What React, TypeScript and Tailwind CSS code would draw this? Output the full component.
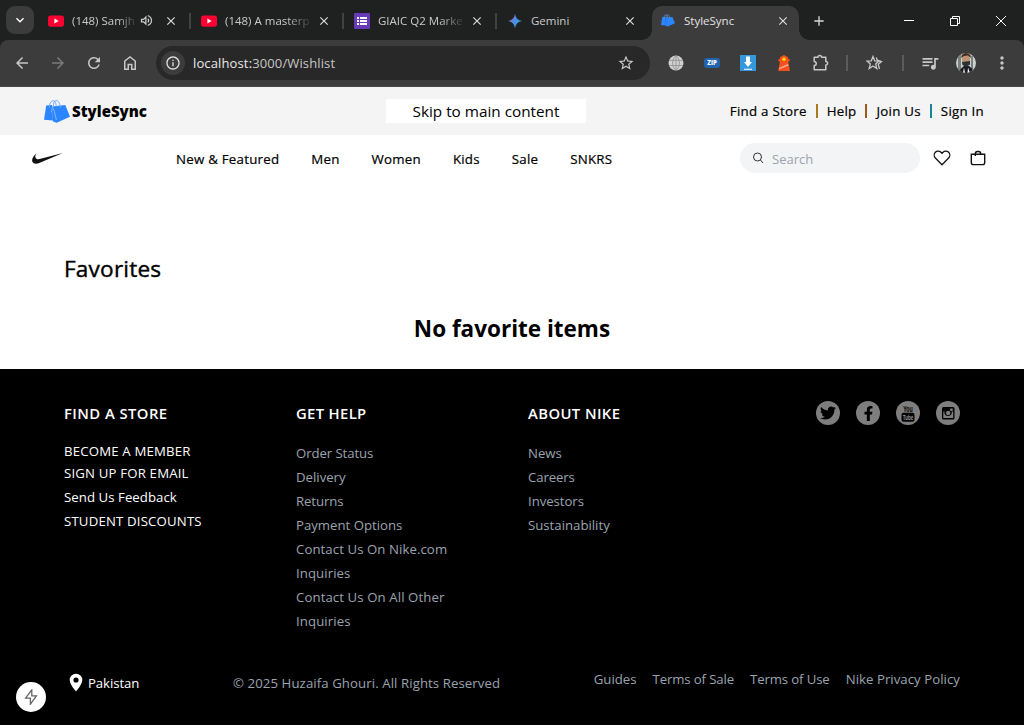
import React from "react";
import { FaFacebookF, FaTwitter } from "react-icons/fa";
import {
  MdArrowBack,
  MdArrowForward,
  MdClose,
  MdAdd,
  MdRefresh,
  MdMoreVert,
  MdStarBorder,
  MdOutlineInfo,
  MdOutlineVolumeUp,
  MdQueueMusic,
  MdKeyboardArrowDown,
} from "react-icons/md";

function YouTubeIcon() {
  return (
    <svg viewBox="0 0 16 16" className="size-4 shrink-0">
      <rect y="2.4" width="16" height="11.3" rx="2.6" fill="#ff0033" />
      <path d="M6.4 5.6v4.8L10.6 8z" fill="#fff" />
    </svg>
  );
}

function FormsIcon() {
  return (
    <svg viewBox="0 0 16 16" className="size-4 shrink-0">
      <rect width="16" height="16" rx="1" fill="#673ab7" />
      <path d="M3 4h2v2H3zM6 4h7v2H6zM3 7h2v2H3zM6 7h7v2H6zM3 10h2v2H3zM6 10h7v2H6z" fill="#fff" />
    </svg>
  );
}

function GeminiIcon() {
  return (
    <svg viewBox="0 0 16 16" className="size-4 shrink-0">
      <defs>
        <linearGradient id="gem" x1="0" y1="0.3" x2="1" y2="0.7">
          <stop offset="0" stopColor="#9b72cb" />
          <stop offset="0.5" stopColor="#4a8de0" />
          <stop offset="1" stopColor="#2ba5e0" />
        </linearGradient>
      </defs>
      <path d="M8 1Q9 7 15 8Q9 9 8 15Q7 9 1 8Q7 7 8 1z" fill="url(#gem)" />
    </svg>
  );
}

function BagsIcon({ className, gap }: { className: string; gap: string }) {
  return (
    <svg viewBox="0 0 26 23" className={className}>
      <path d="M2.2 5.6 8 5 9 20.6 0 19.8z" fill="#2a85ff" />
      <path d="M7.6 6.4 21.3 4.9 26 16.8 12.6 22.8 9 21.4z" fill="#2a85ff" />
      <path d="M8.600 6.400 7.400 12.500M9.600 8.500 12.400 20" stroke={gap} strokeWidth="0.450" fill="none" />
      <path d="M5.600 7.600C5.400 3.400 6.600 1 9 .9S12 3 12.200 6.600M9.500 7C9.200 3.500 10 .9 12.200.6S15.700 3 16.400 7.600" stroke="#6fabff" strokeWidth="1" fill="none" />
    </svg>
  );
}

type Tab = { title: string; icon: React.ReactNode; audio?: boolean; active?: boolean; fade?: boolean };

const tabs: Tab[] = [
  { title: "(148) Samjh", icon: <YouTubeIcon />, audio: true, fade: true },
  { title: "(148) A masterp", icon: <YouTubeIcon />, fade: true },
  { title: "GIAIC Q2 Marke", icon: <FormsIcon />, fade: true },
  { title: "Gemini", icon: <GeminiIcon /> },
  { title: "StyleSync", icon: <BagsIcon className="mx-px h-[13px] w-3.5 shrink-0" gap="#1668d8" />, active: true },
];

function BrowserTab({ tab, divider }: { tab: Tab; divider: boolean }) {
  return (
    <>
      <div
        className={`flex h-[34px] w-[147px] shrink-0 items-center pb-[5px] pl-2 pr-[9px] ${
          tab.active ? "relative rounded-t-[10px] bg-[#3c3c3c]" : ""
        }`}
      >
        {tab.active && (
          <>
            <span className="absolute -left-2.5 bottom-0 size-2.5 bg-[radial-gradient(circle_at_0_0,transparent_9.5px,#3c3c3c_10px)]" />
            <span className="absolute -right-2.5 bottom-0 size-2.5 bg-[radial-gradient(circle_at_100%_0,transparent_9.5px,#3c3c3c_10px)]" />
          </>
        )}
        {tab.icon}
        <span
          className={`ml-2 flex-1 overflow-hidden whitespace-nowrap text-[11.5px] leading-4 ${
            tab.active ? "text-[#e3e3e3]" : "text-[#c9cbca]"
          } ${tab.fade ? "[mask-image:linear-gradient(to_right,black_68%,transparent_98%)]" : ""}`}
        >
          {tab.title}
        </span>
        {tab.audio && <MdOutlineVolumeUp className="mr-2 size-[15px] shrink-0 text-[#c9cbca]" />}
        <MdClose className="ml-0.5 size-3.5 shrink-0 text-[#dcdcdc]" />
      </div>
      {divider && (
        <div className="flex h-[29px] w-1.5 shrink-0 items-center justify-center">
          <span className="h-4 w-0.5 bg-[#414342]" />
        </div>
      )}
      {!divider && !tab.active && <div className="w-1.5 shrink-0" />}
    </>
  );
}

function BrowserChrome() {
  return (
    <header className="h-[87px] border-b border-[#4b474b] bg-[#1f2121]">
      <div className="flex h-10 pt-1.5 pl-1.5">
        <div className="mr-1.5 flex size-7 items-center justify-center rounded-[9px] bg-[#3c3c3c] text-white">
          <MdKeyboardArrowDown className="size-4" />
        </div>
        {tabs.map((t, i) => (
          <BrowserTab key={i} tab={t} divider={i < 3} />
        ))}
        <div className="flex h-[29px] flex-1 items-center text-white">
          <MdAdd className="ml-3 size-4 text-[#d8d8d8]" />
          <span className="ml-[77px] h-px w-2.5 bg-white" />
          <svg viewBox="0 0 10 10" className="ml-9 size-2.5" fill="none" stroke="#fff">
            <path d="M.5 2.5h7v7h-7zM2.5 2.5v-2h7v7h-2" />
          </svg>
          <svg viewBox="0 0 10 10" className="ml-9 size-2.5" fill="none" stroke="#fff">
            <path d="M0 0l10 10M10 0L0 10" />
          </svg>
        </div>
      </div>
      <div className="flex h-[46px] items-center rounded-t-lg bg-[#3c3c3c] text-[#c7c7c7]">
        <MdArrowBack className="ml-[13px] size-[18px]" />
        <MdArrowForward className="ml-[18px] size-[18px] text-[#7a7a7a]" />
        <MdRefresh className="ml-[18px] size-[18px]" />
        <svg viewBox="0 0 18 18" className="ml-[18px] size-[18px]" fill="none" stroke="#c7c7c7" strokeWidth="1.500">
          <path d="M3.750 7v8.250h3.500V10.500h3.500v4.750h3.500V7L9 3z" />
        </svg>
        <div className="ml-[17px] flex h-[34px] w-[494px] items-center rounded-full bg-[#282828] pl-[5px] pr-[15px]">
          <span className="flex size-6 items-center justify-center rounded-full bg-[#3c3c3c]">
            <MdOutlineInfo className="size-4 text-[#e0e0e0]" />
          </span>
          <span className="ml-2 flex-1 text-[13px] leading-5 tracking-[0.13px] text-[#c7c7c7]">
            <span className="text-[#e8e8e8]">localhost:</span>3000/Wishlist
          </span>
          <MdStarBorder className="size-[18px]" />
        </div>
        <svg viewBox="0 0 16 16" className="ml-[18px] size-4" fill="none">
          <circle cx="8" cy="8" r="7.500" fill="#d0d0d0" />
          <path d="M1 5.300h14M1 10.500h14M8 0v16M8 .5C3.500 4 3.500 12 8 15.500M8 .5c4.500 3.500 4.500 11.500 0 15" stroke="#858585" strokeWidth=".7" />
        </svg>
        <span className="ml-5 flex h-2.5 w-4 items-center justify-center rounded-[3px] bg-[#2362ad] text-[6px] leading-none font-extrabold text-white">
          ZIP
        </span>
        <svg viewBox="0 0 16 16" className="ml-5 size-4">
          <path fill="#3498db" d="M0 0h16v16H0z" />
          <path d="M6 1.500h4V7h2L8 12 4 7h2zM4 13.800h8v1H4z" fill="#fff" />
        </svg>
        <svg viewBox="0 0 16 16" className="ml-5 size-4">
          <path d="M4 2.200 8 0l4 2.200V4h1.500v2.500H12.200L14 16H2.200L4 6.500H2.500V4H4z" fill="#f4511e" />
          <path d="M3.500 12.800 12 9l.4 1.500L3 14.500z" fill="#ffab91" />
          <circle cx="8" cy="4.300" r="1.700" fill="#ffd600" />
        </svg>
        <svg viewBox="0 0 18 18" className="ml-5 size-[18px]" fill="none" stroke="#c7c7c7" strokeWidth="1.500" strokeLinejoin="round">
          <path d="M2.200 3.200H6a1.800 1.800 0 0 1 3.600 0h4.200v4.300a1.800 1.800 0 0 1 0 3.600v4.700H2.200v-4.200c2.800-.4 2.800-3.800 0-4.200z" />
        </svg>
        <span className="ml-4 h-4 w-0.5 bg-[#5c5c5c]" />
        <svg viewBox="0 0 18 16" className="ml-[17px] h-4 w-[18px]" fill="none" stroke="#c7c7c7" strokeWidth="1.300">
          <path d="M8 1.500 9.700 5.800 14 6.100 10.700 9 11.800 13.500 8 11 4.200 13.500 5.300 9 2 6.100 6.300 5.800z" />
          <path d="M11.200 2.500 12.500 5.400 16.500 6.500 13.300 9.300 14.500 14" />
        </svg>
        <span className="ml-[19px] h-4 w-0.5 bg-[#5c5c5c]" />
        <MdQueueMusic className="ml-4 size-5" />
        <svg viewBox="0 0 20 20" className="ml-4 size-5">
          <clipPath id="face">
            <circle cx="10" cy="10" r="10" />
          </clipPath>
          <g clipPath="url(#face)">
            <path fill="#c9d0ce" d="M0 0h20v20H0z" />
            <path d="M2 0h3v20H2zM15 3h2v17h-2z" fill="#7c817d" />
            <path d="M3 20 5 15.500 8 13h5l3 2.500 1 4.500z" fill="#191d22" />
            <ellipse cx="10" cy="7" rx="4" ry="5" fill="#bd9275" />
            <path d="M5.500 5C5 2 7 0 10 0s5.500 2 4.500 5L12 2.500 8 3z" fill="#442c20" />
            <path d="M6 9 14 8v3.500L10 14l-3.500-2z" fill="#2b3231" />
            <path d="M8 14.500 9 20H7zM12 14.500 11.500 20H14z" fill="#fff" />
          </g>
        </svg>
        <MdMoreVert className="ml-4 size-5" />
      </div>
    </header>
  );
}

function SiteHeader() {
  return (
    <>
      <div className="flex h-12 items-center bg-[#f4f4f4] pl-11 pr-10">
        <BagsIcon className="h-[23px] w-[26px]" gap="#f4f4f4" />
        <span className="ml-0.5 w-[314px] text-[15px] leading-6 font-extrabold tracking-[0.02px]">StyleSync</span>
        <a className="flex h-6 w-[200px] items-center justify-center bg-white pt-px text-[15.3px] leading-[23px]">
          Skip to main content
        </a>
        <div className="ml-auto flex items-center text-[13.3px] leading-5 tracking-[0.26px] [-webkit-text-stroke:0.2px_black]">
          <a>Find a Store</a>
          <span className="mx-[9px] h-3.5 w-0.5 bg-[#a8791f]" />
          <a>Help</a>
          <span className="mx-[9px] h-3.5 w-0.5 bg-[#9a5a1c]" />
          <a>Join Us</a>
          <span className="mx-[9px] h-3.5 w-0.5 bg-[#1a8299]" />
          <a>Sign In</a>
        </div>
      </div>
      <nav className="flex h-[46px] items-center pl-[27px] text-[13.3px] leading-5">
        <svg viewBox="0 0 24 24" className="size-[41px] shrink-0" fill="#111">
          <path d="M21 8.719 7.836 14.303C6.740 14.768 5.818 15 5.075 15c-.836 0-1.445-.295-1.819-.884-.485-.760-.273-1.982.559-3.272.494-.754 1.122-1.446 1.734-2.108-.144.234-1.415 2.349-.025 3.345.275.2.666.298 1.147.298.386 0 .829-.063 1.316-.190z" />
        </svg>
        <div className="ml-[108px] flex gap-8 pt-0.5 tracking-[0.23px] [-webkit-text-stroke:0.2px_black]">
          <a>New &amp; Featured</a>
          <a>Men</a>
          <a>Women</a>
          <a>Kids</a>
          <a>Sale</a>
          <a>SNKRS</a>
        </div>
        <div className="ml-auto flex h-[30px] w-[180px] items-center rounded-full bg-[#f3f4f6] pl-3 text-[13px] text-[#9ca3af]">
          <svg viewBox="0 0 24 24" className="size-3" fill="none" stroke="#333" strokeWidth="2">
            <circle cx="11" cy="10" r="8" />
            <path d="m17 16 5 6" />
          </svg>
          <span className="ml-2 pt-0.5">Search</span>
        </div>
        <svg viewBox="0 0 24 24" className="ml-2.5 size-6" fill="none" stroke="#111" strokeWidth="1.600">
          <path d="M16.794 3.750c1.324 0 2.568.516 3.504 1.451a4.960 4.960 0 0 1 0 7.008L12 20.508l-8.299-8.299a4.960 4.960 0 0 1 0-7.007A4.923 4.923 0 0 1 7.205 3.750c1.324 0 2.568.516 3.504 1.451L12 6.492l1.290-1.291a4.926 4.926 0 0 1 3.504-1.451z" transform="translate(2.400 2) scale(.8 .82)" />
        </svg>
        <svg viewBox="0 0 24 24" className="ml-3 mr-[34px] size-6" fill="none" stroke="#111" strokeWidth="1.400">
          <path d="M5.300 8.200h13.400v8.200a2.200 2.200 0 0 1-2.200 2.200h-9a2.200 2.200 0 0 1-2.200-2.200zM9.300 10V7.700a2.200 2.200 0 0 1 2.200-2.200h1a2.200 2.200 0 0 1 2.200 2.200V8" />
        </svg>
      </nav>
    </>
  );
}

function Round({ children }: { children: React.ReactNode }) {
  return <span className="flex size-6 items-center justify-center rounded-full bg-[#7e7e7e] text-black">{children}</span>;
}

function Footer() {
  return (
    <footer className="relative h-[356px] bg-black px-16 pt-8 text-[13.2px] leading-6 text-[#9ca3af]">
      <div className="grid h-[258px] grid-cols-4 gap-8">
        <div className="text-white">
          <h3 className="pt-px text-[14.8px] leading-[23px] font-semibold tracking-[0.45px]">FIND A STORE</h3>
          <div className="tracking-[0.18px]">
            <p className="mt-3.5 h-[22px]">BECOME A MEMBER</p>
            <p>SIGN UP FOR EMAIL</p>
            <p className="tracking-[0.06px]">Send Us Feedback</p>
            <p>STUDENT DISCOUNTS</p>
          </div>
        </div>
        <div>
          <h3 className="mb-4 pt-px text-[14.8px] leading-[23px] font-semibold tracking-[0.35px] text-white">GET HELP</h3>
          <p className="tracking-[-0.08px]">Order Status</p>
          <p>Delivery</p>
          <p className="tracking-[-0.1px]">Returns</p>
          <p>Payment Options</p>
          <p className="w-40 tracking-[0.08px]">Contact Us On Nike.com Inquiries</p>
          <p className="w-40 tracking-[0.1px]">Contact Us On All Other Inquiries</p>
        </div>
        <div>
          <h3 className="mb-4 pt-px text-[14.8px] leading-[23px] font-semibold tracking-[0.42px] text-white">ABOUT NIKE</h3>
          <p>News</p>
          <p className="tracking-[-0.1px]">Careers</p>
          <p className="tracking-[-0.05px]">Investors</p>
          <p>Sustainability</p>
        </div>
        <div className="flex justify-end gap-4 pt-[0.4px]">
          <Round>
            <FaTwitter className="size-4" />
          </Round>
          <Round>
            <FaFacebookF className="size-[15px]" />
          </Round>
          <Round>
            <svg viewBox="0 0 24 24" className="size-6 font-['Liberation_Sans'] font-bold">
              <text x="12" y="10.800" textAnchor="middle" fontSize="9" textLength="9.500" lengthAdjust="spacingAndGlyphs" fill="#000">You</text>
              <rect x="5.500" y="11.800" width="13" height="9" rx="2" fill="#000" />
              <text x="12" y="19" textAnchor="middle" fontSize="7.500" textLength="10.500" lengthAdjust="spacingAndGlyphs" fill="#9a9a9a">Tube</text>
            </svg>
          </Round>
          <Round>
            <svg viewBox="0 0 24 24" className="size-6">
              <rect x="6" y="6" width="12.500" height="12.500" rx="1.500" fill="#000" />
              <path d="M7.300 10.500v6.500h9.900v-6.500h-1.500a3.700 3.700 0 1 1-7.200 0zM14.200 7.500h2.500V10h-2.500z" fill="#7e7e7e" />
              <circle cx="12.200" cy="12" r="2.200" fill="#7e7e7e" />
            </svg>
          </Round>
        </div>
      </div>
      <div className="mt-1 flex">
        <div className="flex w-[169px] items-center pl-1 pt-2 tracking-[-0.08px] text-white">
          <svg viewBox="0 0 16 20" className="mr-1 h-5 w-4" fill="#fff">
            <path d="M8 .7a6.300 6.300 0 0 0-6.300 6.300C1.700 11.500 8 18.400 8 18.400s6.300-6.900 6.300-11.400A6.300 6.300 0 0 0 8 .7zm0 3.700a2.600 2.600 0 1 1 0 5.200 2.600 2.600 0 0 1 0-5.200z" />
          </svg>
          Pakistan
        </div>
        <p className="pt-2 tracking-[0.09px]">© 2025 Huzaifa Ghouri. All Rights Reserved</p>
        <div className="ml-auto flex gap-4 pt-1">
          <a>Guides</a>
          <a className="tracking-[-0.12px]">Terms of Sale</a>
          <a className="tracking-[-0.12px]">Terms of Use</a>
          <a className="tracking-[0.05px]">Nike Privacy Policy</a>
        </div>
      </div>
      <span className="absolute left-4 top-[313px] flex size-[30px] items-center justify-center rounded-full bg-white">
        <svg viewBox="0 0 16 16" className="size-4" fill="none" stroke="#666" strokeWidth="1.300">
          <path d="M8.800.8 2.600 9.200h4.800v6l6-8.400H8.800z" />
        </svg>
      </span>
    </footer>
  );
}

export default function App() {
  return (
    <div className="h-[728px] w-[1024px] overflow-hidden bg-white font-['Open_Sans','Noto_Sans',sans-serif] text-black">
      <BrowserChrome />
      <SiteHeader />
      <main className="h-[188px] pt-[72px]">
        <h1 className="ml-16 text-[22.6px] leading-8 tracking-[0.2px] [-webkit-text-stroke:0.4px_black]">Favorites</h1>
        <h2 className="mt-7 text-center text-[22.5px] leading-8 font-bold">No favorite items</h2>
      </main>
      <Footer />
    </div>
  );
}
